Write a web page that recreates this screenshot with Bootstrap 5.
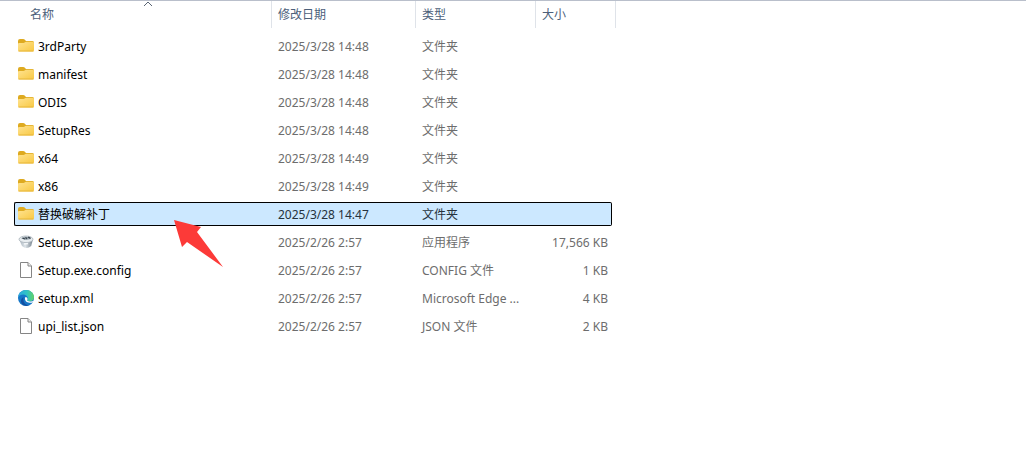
<!DOCTYPE html>
<html lang="zh-CN">
<head>
<meta charset="utf-8">
<meta name="viewport" content="width=device-width, initial-scale=1">
<title>文件</title>
<link href="https://cdn.jsdelivr.net/npm/bootstrap@5.3.0/dist/css/bootstrap.min.css" rel="stylesheet">
<style>
body { font: 12px/18px "Noto Sans", "Noto Sans CJK SC", sans-serif; color: #191919; background: #fff; }
.explorer { border-top: 1px solid #b9bfcb; padding-left: 14px; }
.files { table-layout: fixed; width: 602px; border-collapse: separate; border-spacing: 0 4px; margin-top: -4px; }
.files col.c-name { width: 258px; }
.files col.c-date { width: 144px; }
.files col.c-type { width: 120px; }
.files col.c-size { width: 76px; }
.files col.c-end { width: 4px; }
.files th { height: 29px; padding: 0 0 2px 6px; font-weight: 400; background: linear-gradient(#dfe3e9, #dfe3e9) right top / 1px 27px no-repeat; }
.files th:first-child { padding-left: 16px; }
.files th.open-end { background: none; }
.files th button { color: #4c607a; }
.files td { height: 24px; padding: 2px 4px 0 6px; color: #6d6d6d; white-space: nowrap; overflow: hidden; text-overflow: ellipsis; }
.files .name { padding: 0 0 0 4px; color: #000; overflow: visible; }
.files .name span { padding-top: 2px; }
.files .gutter { padding: 0; }
.sort { left: 129px; top: 0; }
.ico { width: 16px; height: 16px; flex: none; overflow: visible; }
.chosen td:not(.gutter) { background: #cce8ff; color: #26323c; border: solid #000; border-width: 1px 0; }
.chosen td.name { border-left-width: 1px; border-radius: 2px 0 0 2px; padding-left: 3px; color: #000; }
.chosen td.size { border-right-width: 1px; border-radius: 0 2px 2px 0; }
.pointer { left: 159px; top: 16px; pointer-events: none; }
</style>
</head>
<body>
<svg class="position-absolute" width="0" height="0" aria-hidden="true">
  <defs>
    <linearGradient id="gold" x1="0" y1="0" x2="1" y2="1"><stop stop-color="#ffe391"/><stop offset="1" stop-color="#f8c842"/></linearGradient>
    <linearGradient id="sea" x1="0" y1="0" x2="1" y2="0"><stop stop-color="#2aa9e0"/><stop offset=".55" stop-color="#31c3c4"/><stop offset="1" stop-color="#62d463"/></linearGradient>
    <linearGradient id="steel" x1="0" y1="0" x2="1" y2="0"><stop stop-color="#a9b4bd"/><stop offset=".45" stop-color="#dde4e9"/><stop offset="1" stop-color="#74808b"/></linearGradient>
  </defs>
  <symbol id="folder" viewBox="0 0 16 16">
    <path d="M0 3Q0 1 2 1H5.300Q6 1 6.600 1.600L8 3H14.500Q16 3 16 4.500V8H0Z" fill="#deaa20"/>
    <path d="M0 6Q0 5 1 5H5.500Q6.300 5 7 4.300Q7.500 3.800 8.400 3.800H14.700Q16 3.800 16 5V12Q16 13.500 14.500 13.500H1.500Q0 13.500 0 12Z" fill="url(#gold)"/>
    <path d="M.5 13H15.500" stroke="#e7b63b"/>
  </symbol>
  <symbol id="page" viewBox="0 0 16 16">
    <path d="M2.500 .5H10L13.500 4V15.500H2.500Z" fill="#fff" stroke="#858585"/>
    <path d="M10 .5V4H13.500" fill="#eee" stroke="#858585"/>
  </symbol>
  <symbol id="edge" viewBox="0 0 16 16">
    <circle cx="8" cy="8" r="8" fill="#1677c8"/>
    <path d="M.1 7.200C.6 3 4 0 8 0C12.600 0 16 3.500 16 7.200C16 9.700 14 11.200 11.800 11.200C10 11.200 8.900 10.600 9.200 9.900C10.200 8.800 9.900 6.600 8.200 5.500C5.600 3.700 1.800 4.500 .1 7.200Z" fill="url(#sea)"/>
    <path d="M5.600 7.300C4.400 11 7 15 11.200 15.300C7.500 17 3.200 15 3 11.300C2.900 9.400 4 7.900 5.600 7.300Z" fill="#124fa2"/>
    <path d="M7.600 7C6 8.600 7.200 12.700 11.500 12.800C13 12.900 14.300 12.400 15.200 11.900L16.500 11V10.400C15 11.400 13.700 11.500 12 11.400C9.800 11.300 8.700 10.700 9.200 9.900C9.900 8.800 9.400 7.300 7.600 7Z" fill="#fff"/>
  </symbol>
  <symbol id="installer" viewBox="0 0 16 16">
    <path d="M1 5L15 5L13.200 12Q8.500 16 4 12Z" fill="url(#steel)"/>
    <ellipse cx="8" cy="5.300" rx="7" ry="3.300" fill="#e8edf0" stroke="#a0aab3" stroke-width=".7"/>
    <path d="M3 4.300L7 2.400L12 3.300L13 5L8 6Z" fill="#9ba7af"/>
    <path d="M4.500 4.200L7 5M10 3L12.500 4.400M7.500 3.500L9 4.700" stroke="#35414b" stroke-width="1.300"/>
    <path d="M6 10L10 9.500" stroke="#f4f7f9" stroke-width="1.500"/>
  </symbol>
</svg>

<main class="explorer">
  <table class="files">
    <colgroup><col class="c-name"><col class="c-date"><col class="c-type"><col class="c-size"><col class="c-end"></colgroup>
    <thead>
      <tr>
        <th scope="col" class="position-relative" aria-sort="ascending"><button type="button" class="border-0 bg-transparent p-0">名称</button>
          <svg class="sort position-absolute" width="10" height="6" viewBox="0 0 10 6" aria-hidden="true"><path d="M1 5L5 1L9 5" fill="none" stroke="#596473"/></svg></th>
        <th scope="col"><button type="button" class="border-0 bg-transparent p-0">修改日期</button></th>
        <th scope="col"><button type="button" class="border-0 bg-transparent p-0">类型</button></th>
        <th scope="col" class="open-end"><button type="button" class="border-0 bg-transparent p-0">大小</button></th>
        <th class="p-0" aria-hidden="true"></th>
      </tr>
    </thead>
    <tbody>
      <tr><td class="name"><div class="d-flex align-items-center gap-1"><svg class="ico"><use href="#folder"/></svg><span>3rdParty</span></div></td><td>2025/3/28 14:48</td><td>文件夹</td><td class="size"></td><td class="gutter"></td></tr>
      <tr><td class="name"><div class="d-flex align-items-center gap-1"><svg class="ico"><use href="#folder"/></svg><span>manifest</span></div></td><td>2025/3/28 14:48</td><td>文件夹</td><td class="size"></td><td class="gutter"></td></tr>
      <tr><td class="name"><div class="d-flex align-items-center gap-1"><svg class="ico"><use href="#folder"/></svg><span>ODIS</span></div></td><td>2025/3/28 14:48</td><td>文件夹</td><td class="size"></td><td class="gutter"></td></tr>
      <tr><td class="name"><div class="d-flex align-items-center gap-1"><svg class="ico"><use href="#folder"/></svg><span>SetupRes</span></div></td><td>2025/3/28 14:48</td><td>文件夹</td><td class="size"></td><td class="gutter"></td></tr>
      <tr><td class="name"><div class="d-flex align-items-center gap-1"><svg class="ico"><use href="#folder"/></svg><span>x64</span></div></td><td>2025/3/28 14:49</td><td>文件夹</td><td class="size"></td><td class="gutter"></td></tr>
      <tr><td class="name"><div class="d-flex align-items-center gap-1"><svg class="ico"><use href="#folder"/></svg><span>x86</span></div></td><td>2025/3/28 14:49</td><td>文件夹</td><td class="size"></td><td class="gutter"></td></tr>
      <tr class="chosen" aria-selected="true"><td class="name position-relative"><div class="d-flex align-items-center gap-1"><svg class="ico"><use href="#folder"/></svg><span>替换破解补丁</span></div>
        <svg class="pointer position-absolute z-1" width="50" height="49" viewBox="0 0 50 49" aria-hidden="true"><path d="M0 1L27 8L23 13L49 48L13 23L8 28Z" fill="#fc3a38"/></svg></td><td>2025/3/28 14:47</td><td>文件夹</td><td class="size"></td><td class="gutter"></td></tr>
      <tr><td class="name"><div class="d-flex align-items-center gap-1"><svg class="ico"><use href="#installer"/></svg><span>Setup.exe</span></div></td><td>2025/2/26 2:57</td><td>应用程序</td><td class="size text-end">17,566 KB</td><td class="gutter"></td></tr>
      <tr><td class="name"><div class="d-flex align-items-center gap-1"><svg class="ico"><use href="#page"/></svg><span>Setup.exe.config</span></div></td><td>2025/2/26 2:57</td><td>CONFIG 文件</td><td class="size text-end">1 KB</td><td class="gutter"></td></tr>
      <tr><td class="name"><div class="d-flex align-items-center gap-1"><svg class="ico"><use href="#edge"/></svg><span>setup.xml</span></div></td><td>2025/2/26 2:57</td><td>Microsoft Edge ...</td><td class="size text-end">4 KB</td><td class="gutter"></td></tr>
      <tr><td class="name"><div class="d-flex align-items-center gap-1"><svg class="ico"><use href="#page"/></svg><span>upi_list.json</span></div></td><td>2025/2/26 2:57</td><td>JSON 文件</td><td class="size text-end">2 KB</td><td class="gutter"></td></tr>
    </tbody>
  </table>
</main>
<script src="https://cdn.jsdelivr.net/npm/bootstrap@5.3.0/dist/js/bootstrap.bundle.min.js"></script>
</body>
</html>
